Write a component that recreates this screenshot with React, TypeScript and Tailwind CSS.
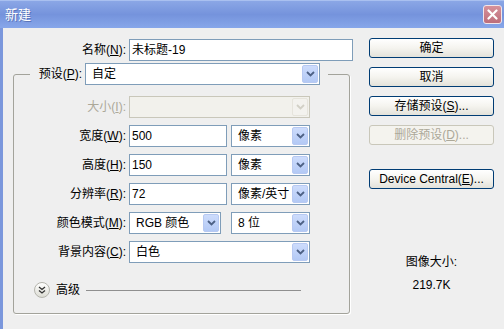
import React from 'react';

const Chevron = ({ disabled }: { disabled?: boolean }) => (
  <svg width="9" height="6" viewBox="0 0 9 6">
    <path
      d="M1 1l3.5 3.5L8 1"
      fill="none"
      stroke={disabled ? '#d2d0c6' : '#4d6185'}
      strokeWidth="1.8"
    />
  </svg>
);

const Select = ({
  value,
  width,
  disabled,
}: {
  value?: string;
  width: string;
  disabled?: boolean;
}) => (
  <div
    className={`h-[22px] flex items-center border ${width} ${
      disabled ? 'border-[#c9c7ba] bg-[#f2f1ec]' : 'border-[#7f9db9] bg-white'
    }`}
  >
    <span className="flex-1 pl-[6px] whitespace-nowrap overflow-hidden">{value}</span>
    <span
      className={`mr-[1px] h-[18px] w-[16px] flex items-center justify-center rounded-[2px] border ${
        disabled
          ? 'border-[#e6e4dc] bg-[#f3f2ee]'
          : 'border-[#b7c9f2] bg-gradient-to-b from-[#cddcfc] to-[#b3c9f5]'
      }`}
    >
      <Chevron disabled={disabled} />
    </span>
  </div>
);

const Input = ({ value, width }: { value: string; width: string }) => (
  <div className={`h-[22px] flex items-center border border-[#7f9db9] bg-white pl-[2px] ${width}`}>
    {value}
  </div>
);

const Label = ({ text, hot, tail }: { text: string; hot: string; tail?: string }) => (
  <span className="whitespace-nowrap">
    {text}(<span className="underline">{hot}</span>){tail ?? ':'}
  </span>
);

const Button = ({ children, disabled }: { children: React.ReactNode; disabled?: boolean }) => (
  <div
    className={`h-[20px] w-[125px] flex items-center justify-center rounded-[3px] border ${
      disabled
        ? 'border-[#c9c7ba] text-[#aca899] bg-[#f4f3ee]'
        : 'border-[#003c74] bg-gradient-to-b from-white via-[#f5f4ef] to-[#e3e2da]'
    }`}
  >
    {children}
  </div>
);

const Row = ({ children }: { children: React.ReactNode }) => (
  <div className="h-[22px] flex items-center">{children}</div>
);

export default function App() {
  return (
    <div className="w-[504px] h-[329px] overflow-hidden bg-[#efefef] text-[12px] leading-[16px] text-black font-['Liberation_Sans','Noto_Sans_CJK_SC',sans-serif]">
      {/* title bar */}
      <div className="h-[28px] flex items-center justify-between bg-gradient-to-b from-[#8ba7e6] via-[#7593dc] to-[#87a7ea] border-t border-[#a9c0f0]">
        <span className="pl-[5px] text-[13px] text-white [text-shadow:1px_1px_0_#5a74b8]">新建</span>
        <div className="mr-[2px] w-[19px] h-[19px] rounded-[3px] border border-[#f2e6ea] bg-gradient-to-b from-[#d6919b] to-[#bd6e7b] flex items-center justify-center">
          <svg width="11" height="11" viewBox="0 0 11 11">
            <path d="M1.5 1.5l8 8M9.5 1.5l-8 8" stroke="white" strokeWidth="2.2" strokeLinecap="round" />
          </svg>
        </div>
      </div>

      <div className="flex h-[301px] border-l-[3px] border-[#7b97dc]">
        {/* left column */}
        <div className="w-[350px] pt-[11px] flex flex-col">
          <Row>
            <div className="w-[126px] text-right pr-[3px]">
              <Label text="名称" hot="N" />
            </div>
            <Input value="未标题-19" width="w-[224px]" />
          </Row>

          {/* group box */}
          <div className="mt-[13px] ml-[10px] w-[337px] h-[240px] flex flex-col border border-[#a3a39b] rounded-[3px] shadow-[1px_1px_0_#ffffff]">
            <div className="-mt-[12px] ml-[16px] pr-[8px] w-fit flex items-center bg-[#efefef]">
              <span className="w-[55px] text-right pr-[3px]">
                <Label text="预设" hot="P" />
              </span>
              <Select value="自定" width="w-[235px]" />
            </div>

            <div className="pt-[11px] flex flex-col gap-[7px]">
              <Row>
                <div className="w-[115px] text-right pr-[3px] text-[#aca899]">
                  <Label text="大小" hot="I" />
                </div>
                <Select width="w-[181px]" disabled />
              </Row>

              <Row>
                <div className="w-[115px] text-right pr-[3px]">
                  <Label text="宽度" hot="W" />
                </div>
                <Input value="500" width="w-[98px]" />
                <div className="ml-[4px]">
                  <Select value="像素" width="w-[79px]" />
                </div>
              </Row>

              <Row>
                <div className="w-[115px] text-right pr-[3px]">
                  <Label text="高度" hot="H" />
                </div>
                <Input value="150" width="w-[98px]" />
                <div className="ml-[4px]">
                  <Select value="像素" width="w-[79px]" />
                </div>
              </Row>

              <Row>
                <div className="w-[115px] text-right pr-[3px]">
                  <Label text="分辨率" hot="R" />
                </div>
                <Input value="72" width="w-[98px]" />
                <div className="ml-[4px]">
                  <Select value="像素/英寸" width="w-[79px]" />
                </div>
              </Row>

              <Row>
                <div className="w-[115px] text-right pr-[3px]">
                  <Label text="颜色模式" hot="M" />
                </div>
                <Select value="RGB 颜色" width="w-[92px]" />
                <div className="ml-[10px]">
                  <Select value="8 位" width="w-[79px]" />
                </div>
              </Row>

              <Row>
                <div className="w-[115px] text-right pr-[3px]">
                  <Label text="背景内容" hot="C" />
                </div>
                <Select value="白色" width="w-[181px]" />
              </Row>

              <div className="mt-[12px] h-[16px] flex items-center pl-[20px]">
                <span className="w-[16px] h-[16px] rounded-full border border-[#b5b5ad] bg-gradient-to-b from-white to-[#dcdcd4] flex items-center justify-center">
                  <svg width="8" height="8" viewBox="0 0 8 8">
                    <path d="M1 1l3 2.5L7 1M1 4.5l3 2.5L7 4.5" fill="none" stroke="#333" strokeWidth="1.3" />
                  </svg>
                </span>
                <span className="ml-[6px]">高级</span>
                <span className="ml-[6px] w-[215px] h-px bg-[#8f8f8f]" />
              </div>
            </div>
          </div>
        </div>

        {/* right column */}
        <div className="pl-[16px] pt-[10px] flex flex-col">
          <Button>确定</Button>
          <div className="mt-[9px]">
            <Button>取消</Button>
          </div>
          <div className="mt-[9px]">
            <Button>
              <Label text="存储预设" hot="S" tail="..." />
            </Button>
          </div>
          <div className="mt-[9px]">
            <Button disabled>
              <Label text="删除预设" hot="D" tail="..." />
            </Button>
          </div>
          <div className="mt-[24px]">
            <Button>
              <Label text="Device Central" hot="E" tail="..." />
            </Button>
          </div>
          <div className="mt-[65px] w-[125px] text-center">图像大小:</div>
          <div className="mt-[7px] w-[125px] text-center">219.7K</div>
        </div>
      </div>
    </div>
  );
}
